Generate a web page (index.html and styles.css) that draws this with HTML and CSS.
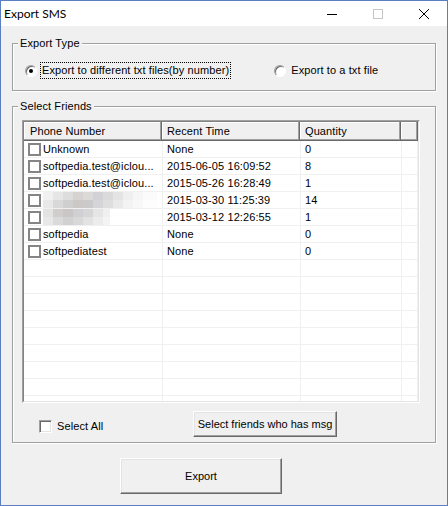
FILE: index.html
```html
<!DOCTYPE html>
<html>
<head>
<meta charset="utf-8">
<title>Export SMS</title>
<link rel="stylesheet" href="styles.css">
</head>
<body>
<div class="window">
  <div class="titlebar">
    <span class="title">Export SMS</span>
    <div class="caption">
      <span class="cbtn"><svg width="10" height="10" viewBox="0 0 10 10"><line x1="0" y1="5.5" x2="10" y2="5.5" stroke="#000" stroke-width="1"/></svg></span>
      <span class="cbtn"><svg width="10" height="10" viewBox="0 0 10 10"><rect x="0.5" y="0.5" width="9" height="9" fill="none" stroke="#c6c6c6" stroke-width="1"/></svg></span>
      <span class="cbtn"><svg width="10" height="10" viewBox="0 0 10 10"><path d="M0 0L10 10M10 0L0 10" stroke="#000" stroke-width="1" fill="none"/></svg></span>
    </div>
  </div>
  <div class="client">
    <fieldset class="group g1">
      <legend>Export Type</legend>
      <div class="radios">
        <label class="radio"><span class="rb on"></span><span class="rtext focus">Export to different txt files(by number)</span></label>
        <label class="radio r2"><span class="rb"></span><span class="rtext">Export to a txt file</span></label>
      </div>
    </fieldset>
    <fieldset class="group g2">
      <legend>Select Friends</legend>
      <div class="list">
        <div class="list-inner">
          <div class="lhead">
            <div class="hc">Phone Number</div>
            <div class="hc">Recent Time</div>
            <div class="hc">Quantity</div>
            <div class="hc"></div>
          </div>
          <div class="lrow"><div class="c c1"><span class="chk"></span><span>Unknown</span></div><div class="c">None</div><div class="c">0</div><div class="c"></div></div>
          <div class="lrow"><div class="c c1"><span class="chk"></span><span>softpedia.test@iclou...</span></div><div class="c">2015-06-05 16:09:52</div><div class="c">8</div><div class="c"></div></div>
          <div class="lrow"><div class="c c1"><span class="chk"></span><span>softpedia.test@iclou...</span></div><div class="c">2015-05-26 16:28:49</div><div class="c">1</div><div class="c"></div></div>
          <div class="lrow"><div class="c c1"><span class="chk"></span><span class="blur blur-a"></span></div><div class="c">2015-03-30 11:25:39</div><div class="c">14</div><div class="c"></div></div>
          <div class="lrow"><div class="c c1"><span class="chk"></span><span class="blur blur-b"></span></div><div class="c">2015-03-12 12:26:55</div><div class="c">1</div><div class="c"></div></div>
          <div class="lrow"><div class="c c1"><span class="chk"></span><span>softpedia</span></div><div class="c">None</div><div class="c">0</div><div class="c"></div></div>
          <div class="lrow"><div class="c c1"><span class="chk"></span><span>softpediatest</span></div><div class="c">None</div><div class="c">0</div><div class="c"></div></div>
          <div class="lrow"><div class="c"></div><div class="c"></div><div class="c"></div><div class="c"></div></div>
          <div class="lrow"><div class="c"></div><div class="c"></div><div class="c"></div><div class="c"></div></div>
          <div class="lrow"><div class="c"></div><div class="c"></div><div class="c"></div><div class="c"></div></div>
          <div class="lrow"><div class="c"></div><div class="c"></div><div class="c"></div><div class="c"></div></div>
          <div class="lrow"><div class="c"></div><div class="c"></div><div class="c"></div><div class="c"></div></div>
          <div class="lrow"><div class="c"></div><div class="c"></div><div class="c"></div><div class="c"></div></div>
          <div class="lrow"><div class="c"></div><div class="c"></div><div class="c"></div><div class="c"></div></div>
          <div class="lrow"><div class="c"></div><div class="c"></div><div class="c"></div><div class="c"></div></div>
          <div class="lrow"><div class="c"></div><div class="c"></div><div class="c"></div><div class="c"></div></div>
        </div>
      </div>
      <div class="bottom">
        <label class="selall"><span class="cb3d"></span><span>Select All</span></label>
        <button class="btn selbtn">Select friends who has msg</button>
      </div>
    </fieldset>
    <button class="btn export">Export</button>
  </div>
</div>
</body>
</html>
```

FILE: styles.css
```css
* { box-sizing: border-box; }
html, body { margin: 0; padding: 0; }
body {
  font-family: "Liberation Sans", Arial, sans-serif;
  font-size: 11px;
  letter-spacing: 0.1px;
  color: #000;
  background: #f0f0f0;
}
.window {
  width: 448px;
  height: 506px;
  border: 1px solid #5a7ebf;
  background: #f0f0f0;
  display: flex;
  flex-direction: column;
  overflow: hidden;
}
.titlebar {
  height: 25px;
  flex: none;
  background: #fff;
  display: flex;
  align-items: center;
}
.title {
  flex: 1;
  padding-left: 3px;
  font-family: Lato, "Liberation Sans", sans-serif;
  font-size: 12px;
  letter-spacing: 0;
}
.caption { display: flex; height: 100%; }
.cbtn {
  width: 46px;
  height: 25px;
  display: flex;
  align-items: center;
  justify-content: center;
}
.cbtn svg { display: block; }
.client {
  flex: 1;
  display: flex;
  flex-direction: column;
  align-items: flex-start;
}
.group {
  margin: 0 0 0 11px;
  padding: 0;
  min-inline-size: 0;
  width: 424px;
  border: 1px solid #a0a0a0;
  box-shadow: 1px 1px 0 #fff, inset 1px 1px 0 #fff;
}
.group legend {
  margin-left: 5px;
  padding: 0 2px;
  line-height: 13px;
  background: #f0f0f0;
}
.g1 { margin-top: 11px; }
.g2 { margin-top: 9px; }

.radios {
  display: flex;
  align-items: center;
  padding: 12px 0 11px 12px;
}
.radio {
  display: flex;
  align-items: center;
  height: 17px;
}
.r2 { margin-left: 44px; }
.rb {
  width: 12px;
  height: 12px;
  flex: none;
  border-radius: 50%;
  background: #fff;
  border: 1px solid;
  border-color: #a0a0a0 #fff #fff #a0a0a0;
  box-shadow: inset 1px 1px 0 #696969;
  display: flex;
  align-items: center;
  justify-content: center;
}
.rb.on::after {
  content: "";
  width: 4px;
  height: 4px;
  border-radius: 50%;
  background: #000;
}
.rtext {
  margin-left: 4px;
  padding: 0 1px;
  line-height: 15px;
}
.focus { outline: 1px dotted #000; outline-offset: 0; }

.list {
  margin: 7px 0 0 9px;
  width: 398px;
  height: 283px;
  border: 1px solid;
  border-color: #a0a0a0 #fff #fff #a0a0a0;
}
.list-inner {
  height: 100%;
  border: 1px solid;
  border-color: #828282 #e3e3e3 #e3e3e3 #828282;
  background: #fff;
  overflow: hidden;
}
.lhead {
  display: grid;
  grid-template-columns: 138px 138px 101px 1fr;
  height: 19px;
}
.hc {
  background: #f0f0f0;
  border-right: 1px solid #696969;
  border-bottom: 1px solid #696969;
  box-shadow: inset -1px -1px 0 #a0a0a0, inset 1px 1px 0 #fff;
  padding-left: 5px;
  line-height: 18px;
  white-space: nowrap;
  overflow: hidden;
}
.hc:first-child { padding-left: 6px; }
.lrow {
  display: grid;
  grid-template-columns: 139px 138px 101px 1fr;
  height: 17px;
}
.c {
  border-right: 1px solid #f0f0f0;
  border-bottom: 1px solid #f0f0f0;
  padding-left: 4px;
  line-height: 16px;
  white-space: nowrap;
  overflow: hidden;
}
.c1 {
  display: flex;
  align-items: center;
  gap: 2px;
}
.chk {
  width: 13px;
  height: 13px;
  flex: none;
  border: 2px solid #858585;
  background: #fff;
}
.blur { height: 16px; display: block; }
.blur-a {
  width: 114px;
  background:
    linear-gradient(90deg, #f1f1f1 0 10px, #e6e6e6 10px 20px, #dddddd 20px 30px, #d6d2d2 30px 40px, #dcd9d9 40px 50px, #d2d2d6 50px 60px, #dadada 60px 70px, #e4e4e4 70px 80px, #efefef 80px 90px, #f6f6f6 90px 100px, #fbfbfb 100px 114px) top / 100% 8px no-repeat,
    linear-gradient(90deg, #e8e8e8 0 10px, #d9d9d9 10px 20px, #cfcfcf 20px 30px, #cdc8c8 30px 40px, #cacaca 40px 50px, #d5d5d8 50px 60px, #dedede 60px 70px, #e9e9e9 70px 80px, #f3f3f3 80px 90px, #f8f8f8 90px 100px, #fdfdfd 100px 114px) bottom / 100% 8px no-repeat;
}
.blur-b {
  width: 67px;
  background:
    linear-gradient(90deg, #e3e3e3 0 10px, #d2cdcd 10px 20px, #cbc6c6 20px 30px, #cfcfd4 30px 40px, #d6d6d6 40px 50px, #e5e5e5 50px 60px, #f0f0f0 60px 67px) top / 100% 8px no-repeat,
    linear-gradient(90deg, #e8e8e8 0 10px, #dadada 10px 20px, #d1d1d1 20px 30px, #d8d8d8 30px 40px, #e2e2e2 40px 50px, #ececec 50px 60px, #f4f4f4 60px 67px) bottom / 100% 8px no-repeat;
}

.bottom {
  display: flex;
  align-items: center;
  height: 26px;
  margin: 8px 0 5px 0;
  padding-left: 26px;
}
.selall {
  display: flex;
  align-items: center;
  gap: 5px;
  margin-top: 4px;
}
.cb3d {
  width: 13px;
  height: 13px;
  flex: none;
  background: #fff;
  border: 1px solid;
  border-color: #a0a0a0 #fff #fff #a0a0a0;
  box-shadow: inset 1px 1px 0 #696969, inset -1px -1px 0 #e3e3e3;
}
.btn {
  font: inherit;
  color: #000;
  background: #f0f0f0;
  padding: 0;
  border: 1px solid;
  border-color: #fff #696969 #696969 #fff;
  box-shadow: inset -1px -1px 0 #a0a0a0, inset 1px 1px 0 #e3e3e3;
  border-radius: 0;
}
.selbtn {
  width: 144px;
  height: 26px;
  margin-left: auto;
  margin-right: 98px;
}
.export {
  width: 162px;
  height: 36px;
  margin: 15px 0 0 119px;
}
```
